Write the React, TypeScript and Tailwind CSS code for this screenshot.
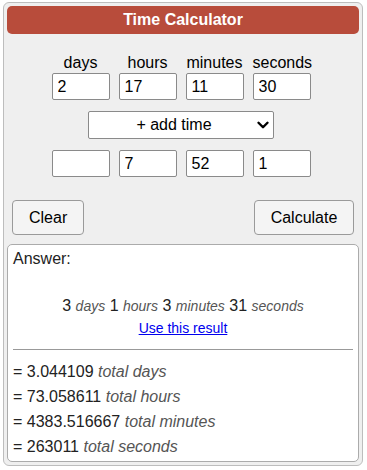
import { ChevronDown } from "lucide-react";

const labels = ["days", "hours", "minutes", "seconds"];
const first = ["2", "17", "11", "30"];
const second = ["", "7", "52", "1"];

const totals = [
  ["3.044109", "total days"],
  ["73.058611", "total hours"],
  ["4383.516667", "total minutes"],
  ["263011", "total seconds"],
];

function Field({ value }: { value: string }) {
  return (
    <input
      defaultValue={value}
      className="w-[58px] h-[27px] border border-[#8a8a8a] rounded-[2px] bg-white px-[5px] text-[16px] text-black outline-none"
    />
  );
}

export default function App() {
  return (
    <div className="font-['Liberation_Sans',Arial,sans-serif] text-black">
      <div className="ml-[3px] mt-[2px] w-[360px] border border-[#bdbdbd] rounded-[6px] bg-[#efefef] p-[3px]">
        {/* Header */}
        <div className="h-[28px] rounded-[5px] bg-[#b84c3b] flex items-center justify-center text-white font-bold text-[16px]">
          Time Calculator
        </div>

        {/* Inputs */}
        <div className="flex flex-col items-center mt-[20px] pr-[4px]">
          <div className="grid grid-cols-[58px_58px_58px_58px] gap-x-[9px]">
            {labels.map((l) => (
              <div key={l} className="text-center text-[16px] leading-[18px] whitespace-nowrap">
                {l}
              </div>
            ))}
            {first.map((v, i) => (
              <div key={i} className="mt-[1px]">
                <Field value={v} />
              </div>
            ))}
          </div>

          <div className="relative mt-[11px] w-[186px] h-[28px] border border-[#8a8a8a] rounded-[2px] bg-white flex items-center justify-center pr-[14px] text-[16px]">
            + add time
            <ChevronDown className="absolute right-[1px] top-[4px] w-[18px] h-[18px]" strokeWidth={3.2} />
          </div>

          <div className="grid grid-cols-[58px_58px_58px_58px] gap-x-[9px] mt-[11px]">
            {second.map((v, i) => (
              <Field key={i} value={v} />
            ))}
          </div>
        </div>

        {/* Buttons */}
        <div className="flex justify-between px-[5px] mt-[23px]">
          <button className="h-[35px] px-[16px] border border-[#9a9a9a] rounded-[4px] bg-[#f4f4f4] text-[16px]">
            Clear
          </button>
          <button className="h-[35px] w-[100px] border border-[#9a9a9a] rounded-[4px] bg-[#f4f4f4] text-[16px]">
            Calculate
          </button>
        </div>

        {/* Answer */}
        <div className="mt-[9px] border border-[#ababab] rounded-[5px] bg-white px-[5px] pt-[5px] pb-[2px]">
          <div className="text-[16px] leading-[18px] text-[#222]">Answer:</div>
          <div className="mt-[27px] text-center leading-[22px] text-[#222]">
            <span className="text-[16px]">3</span>{" "}
            <i className="text-[14px] text-[#555]">days</i>{" "}
            <span className="text-[16px]">1</span>{" "}
            <i className="text-[14px] text-[#555]">hours</i>{" "}
            <span className="text-[16px]">3</span>{" "}
            <i className="text-[14px] text-[#555]">minutes</i>{" "}
            <span className="text-[16px]">31</span>{" "}
            <i className="text-[14px] text-[#555]">seconds</i>
          </div>
          <div className="mt-[2px] text-center text-[14px] leading-[18px]">
            <a href="#" className="text-[#0000ee] underline">
              Use this result
            </a>
          </div>
          <div className="mt-[12px] border-t border-[#999]" />
          <div className="mt-[9px]">
            {totals.map(([n, u]) => (
              <div key={u} className="text-[16px] leading-[25px] text-[#222]">
                = {n} <i className="text-[#555]">{u}</i>
              </div>
            ))}
          </div>
        </div>
      </div>
    </div>
  );
}
